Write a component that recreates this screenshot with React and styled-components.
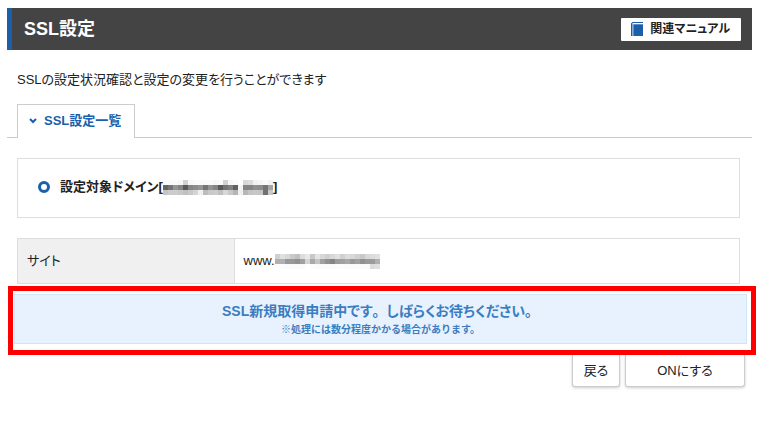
import React from "react";
import styled, { createGlobalStyle } from "styled-components";

const BOLD_MOSAIC = [
  "fa fa fa f6 d0 f6 fa fa fa fa f6 fa d2 f6 fa ff d8 dc f2 f6 fa f4",
  "64 74 94 84 58 84 8c 94 74 92 84 58 74 80 60 f4 84 84 90 8c 74 a4",
  "c4 cc cc c8 c0 c8 d4 f0 bc c8 cc c0 d8 c8 b4 f0 b8 c4 c8 c4 70 c8",
];

const LIGHT_MOSAIC = [
  "d0 e0 d8 c8 c0 dc e8 c8 e4 d8 d0 d8 e0 d0 dc d8 d0 c8 d8 dc e0",
  "b0 b0 98 98 90 a0 d4 a8 c4 a0 90 84 9c a0 a8 98 a0 90 98 9c b0",
  "fc fc fa fa fa fa ff fc fa fa fa fa fc fc fa fa fa fa fa dc e0",
];

const Mosaic = ({ rows }) => {
  const cells = rows.map((row) => row.split(" "));
  return (
    <MosaicSvg
      width={cells[0].length * 5}
      height={15}
      shapeRendering="crispEdges"
      aria-hidden="true"
    >
      {cells.map((row, y) =>
        row.map((tone, x) => (
          <rect
            key={`${x}-${y}`}
            x={x * 5}
            y={y * 5}
            width="5"
            height="5"
            fill={`#${tone}${tone}${tone}`}
          />
        ))
      )}
    </MosaicSvg>
  );
};

export default function App() {
  return (
    <>
      <GlobalStyle />
      <Page>
        <Header>
          <Title>SSL設定</Title>
          <ManualLink href="#manual">
            <svg width="13" height="14" viewBox="0 0 13 14" aria-hidden="true">
              <path fill="#1b5faa" d="M0 1.5 1.5 0H12v1H1.5v13H0z" />
              <path fill="#1b5faa" d="M2.3 2.3H12V14H2.3z" />
            </svg>
            関連マニュアル
          </ManualLink>
        </Header>
        <Lead>SSLの設定状況確認と設定の変更を行うことができます</Lead>
        <TabBar>
          <Tab type="button">
            <svg width="8" height="6" viewBox="0 0 8 6" aria-hidden="true">
              <path d="M1 1l3 3 3-3" fill="none" stroke="#1b5faa" strokeWidth="2" />
            </svg>
            SSL設定一覧
          </Tab>
        </TabBar>
        <Content>
          <DomainCard>
            <Ring />
            <DomainName>
              設定対象ドメイン[
              <Mosaic rows={BOLD_MOSAIC} />]
            </DomainName>
          </DomainCard>
          <SiteTable>
            <tbody>
              <tr>
                <th scope="row">サイト</th>
                <td>
                  www.
                  <Mosaic rows={LIGHT_MOSAIC} />
                </td>
              </tr>
            </tbody>
          </SiteTable>
        </Content>
        <Highlight>
          <Notice>
            <NoticeText>
              SSL新規取得申請中です<Stop>。</Stop>しばらくお待ちください<Stop>。</Stop>
            </NoticeText>
            <NoticeNote>※処理には数分程度かかる場合があります。</NoticeNote>
          </Notice>
        </Highlight>
        <Actions>
          <Button type="button">戻る</Button>
          <Button type="button" $wide>
            ONにする
          </Button>
        </Actions>
      </Page>
    </>
  );
}

const GlobalStyle = createGlobalStyle`
  * {
    box-sizing: border-box;
  }
  body {
    margin: 0;
    background: #fff;
    color: #222;
    font-family: "Liberation Sans", "Noto Sans CJK JP", sans-serif;
    font-size: 13px;
    line-height: 20px;
    font-feature-settings: "palt";
  }
  button {
    font: inherit;
    color: inherit;
    cursor: pointer;
  }
`;
const Page = styled.main`
  padding: 8px 7px;
`;
const Header = styled.header`
  display: flex;
  align-items: center;
  justify-content: space-between;
  height: 42px;
  margin-right: 4px;
  padding: 0 11px 0 12px;
  border-left: 5px solid #1b5faa;
  background: #444;
`;
const Title = styled.h1`
  margin: 0;
  color: #fff;
  font-size: 18px;
  line-height: 24px;
`;
const ManualLink = styled.a`
  display: flex;
  align-items: center;
  gap: 6px;
  height: 23px;
  padding: 0 11px 0 10px;
  border-radius: 1px;
  background: #fff;
  color: #222;
  font-size: 12px;
  font-weight: bold;
  text-decoration: none;
`;
const Lead = styled.p`
  margin: 20px 10px 14px;
`;
const TabBar = styled.div`
  display: flex;
  margin-right: 4px;
  padding-left: 10px;
  border-bottom: 1px solid #ccc;
`;
const Tab = styled.button`
  display: flex;
  align-items: center;
  gap: 7px;
  height: 34px;
  margin-bottom: -1px;
  padding: 0 13px 2px 11px;
  border: 1px solid #ccc;
  border-bottom: 0;
  background: #fff;
  && {
    color: #1b5faa;
    font-weight: bold;
  }
`;
const Content = styled.section`
  margin: 20px 16px 2px 10px;
`;
const DomainCard = styled.div`
  display: flex;
  align-items: center;
  gap: 10px;
  height: 60px;
  margin-bottom: 20px;
  padding: 0 20px 2px;
  border: 1px solid #ddd;
`;
const Ring = styled.span`
  width: 12px;
  height: 12px;
  border: 3px solid #1b5faa;
  border-radius: 50%;
`;
const DomainName = styled.h2`
  display: flex;
  align-items: center;
  margin: 0;
  font-size: 13px;
`;
const SiteTable = styled.table`
  width: 100%;
  border-collapse: collapse;
  th,
  td {
    height: 45px;
    padding: 0 9px;
    border: 1px solid #ddd;
    text-align: left;
    font-weight: normal;
  }
  th {
    width: 30%;
    background: #f0f0f0;
  }
`;
const MosaicSvg = styled.svg`
  vertical-align: middle;
`;
const Highlight = styled.div`
  margin-left: 1px;
  padding: 3px 4px 6px 1px;
  border: 5px solid #f00;
`;
const Notice = styled.div`
  padding: 6px 0 5px;
  border: 1px solid #d0e5f5;
  background: #e8f2ff;
  color: #3b7dc0;
  font-weight: bold;
  text-align: center;
`;
const NoticeText = styled.p`
  margin: 0;
  font-size: 14px;
`;
const Stop = styled.span`
  font-feature-settings: normal;
`;
const NoticeNote = styled.p`
  margin: 0;
  font-size: 10px;
  line-height: 17px;
  font-feature-settings: normal;
`;
const Actions = styled.div`
  display: flex;
  justify-content: flex-end;
  gap: 5px;
  padding-right: 11px;
`;
const Button = styled.button`
  width: ${(props) => (props.$wide ? "120px" : "48px")};
  height: 32px;
  padding: 0;
  border: 1px solid #ccc;
  border-top: 0;
  border-radius: 0 0 3px 3px;
  background: #fff;
  box-shadow: 0 1px 3px rgba(0, 0, 0, 0.2);
`;
